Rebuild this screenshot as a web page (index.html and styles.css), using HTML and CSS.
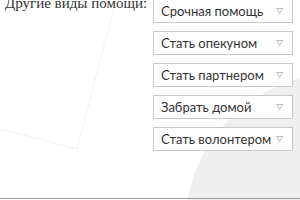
FILE: index.html
```html
<!DOCTYPE html>
<html>
<head>
    <meta charset="utf-8">
    <title>Другие виды помощи</title>
    <link rel="stylesheet" href="styles.css">
</head>
<body>
    <!-- декоративный фон -->
    <svg class="bg-lines" width="300" height="200" viewBox="0 0 300 200">
        <polyline points="116,0 77,149 0,129" fill="none" stroke="#f1f1f1" stroke-width="1"/>
    </svg>

    <div class="help">
        <h2 class="help-title">Другие виды помощи:</h2>
        <div class="help-list">
            <div class="select"><span>Срочная помощь</span><svg class="arrow" width="7" height="6" viewBox="0 0 7 6"><path d="M0.5 0.5 H6.5 L3.5 5.5 Z" fill="none" stroke="#aaa" stroke-width="0.8"/></svg></div>
            <div class="select"><span>Стать опекуном</span><svg class="arrow" width="7" height="6" viewBox="0 0 7 6"><path d="M0.5 0.5 H6.5 L3.5 5.5 Z" fill="none" stroke="#aaa" stroke-width="0.8"/></svg></div>
            <div class="select"><span>Стать партнером</span><svg class="arrow" width="7" height="6" viewBox="0 0 7 6"><path d="M0.5 0.5 H6.5 L3.5 5.5 Z" fill="none" stroke="#aaa" stroke-width="0.8"/></svg></div>
            <div class="select"><span>Забрать домой</span><svg class="arrow" width="7" height="6" viewBox="0 0 7 6"><path d="M0.5 0.5 H6.5 L3.5 5.5 Z" fill="none" stroke="#aaa" stroke-width="0.8"/></svg></div>
            <div class="select"><span>Стать волонтером</span><svg class="arrow" width="7" height="6" viewBox="0 0 7 6"><path d="M0.5 0.5 H6.5 L3.5 5.5 Z" fill="none" stroke="#aaa" stroke-width="0.8"/></svg></div>
        </div>
    </div>

    <div class="bottom-line"></div>
</body>
</html>
```

FILE: styles.css
```css
html, body {
    margin: 0;
    padding: 0;
    width: 300px;
    height: 200px;
    overflow: hidden;
}
body {
    position: relative;
    background: radial-gradient(ellipse 165px 150px at 351px 220px, #efefef 99.4%, #fff 100%) no-repeat;
    background-color: #fff;
}
.bg-lines {
    position: absolute;
    left: 0;
    top: 0;
}
.help {
    position: relative;
    display: flex;
}
.help-title {
    flex: none;
    margin: -6px 0 0 5px;
    width: 148px;
    white-space: nowrap;
    font-family: "Liberation Serif", "DejaVu Serif", serif;
    font-weight: normal;
    font-size: 15px;
    line-height: 18px;
    color: #333;
}
.help-list {
    flex: none;
    display: flex;
    flex-direction: column;
    gap: 8px;
    width: 140px;
    margin-top: -1px;
}
.select {
    box-sizing: border-box;
    height: 24px;
    padding: 0 9px 0 7px;
    display: flex;
    align-items: center;
    justify-content: space-between;
    background: #fff;
    border: 1px solid #c9c9c9;
    font-family: Lato, "Open Sans", sans-serif;
    font-size: 13px;
    white-space: nowrap;
    color: #333;
}
.arrow {
    display: block;
    flex: none;
}
.bottom-line {
    position: absolute;
    left: 0;
    right: 0;
    bottom: 1px;
    height: 1px;
    background: #9a9a9a;
}
```
